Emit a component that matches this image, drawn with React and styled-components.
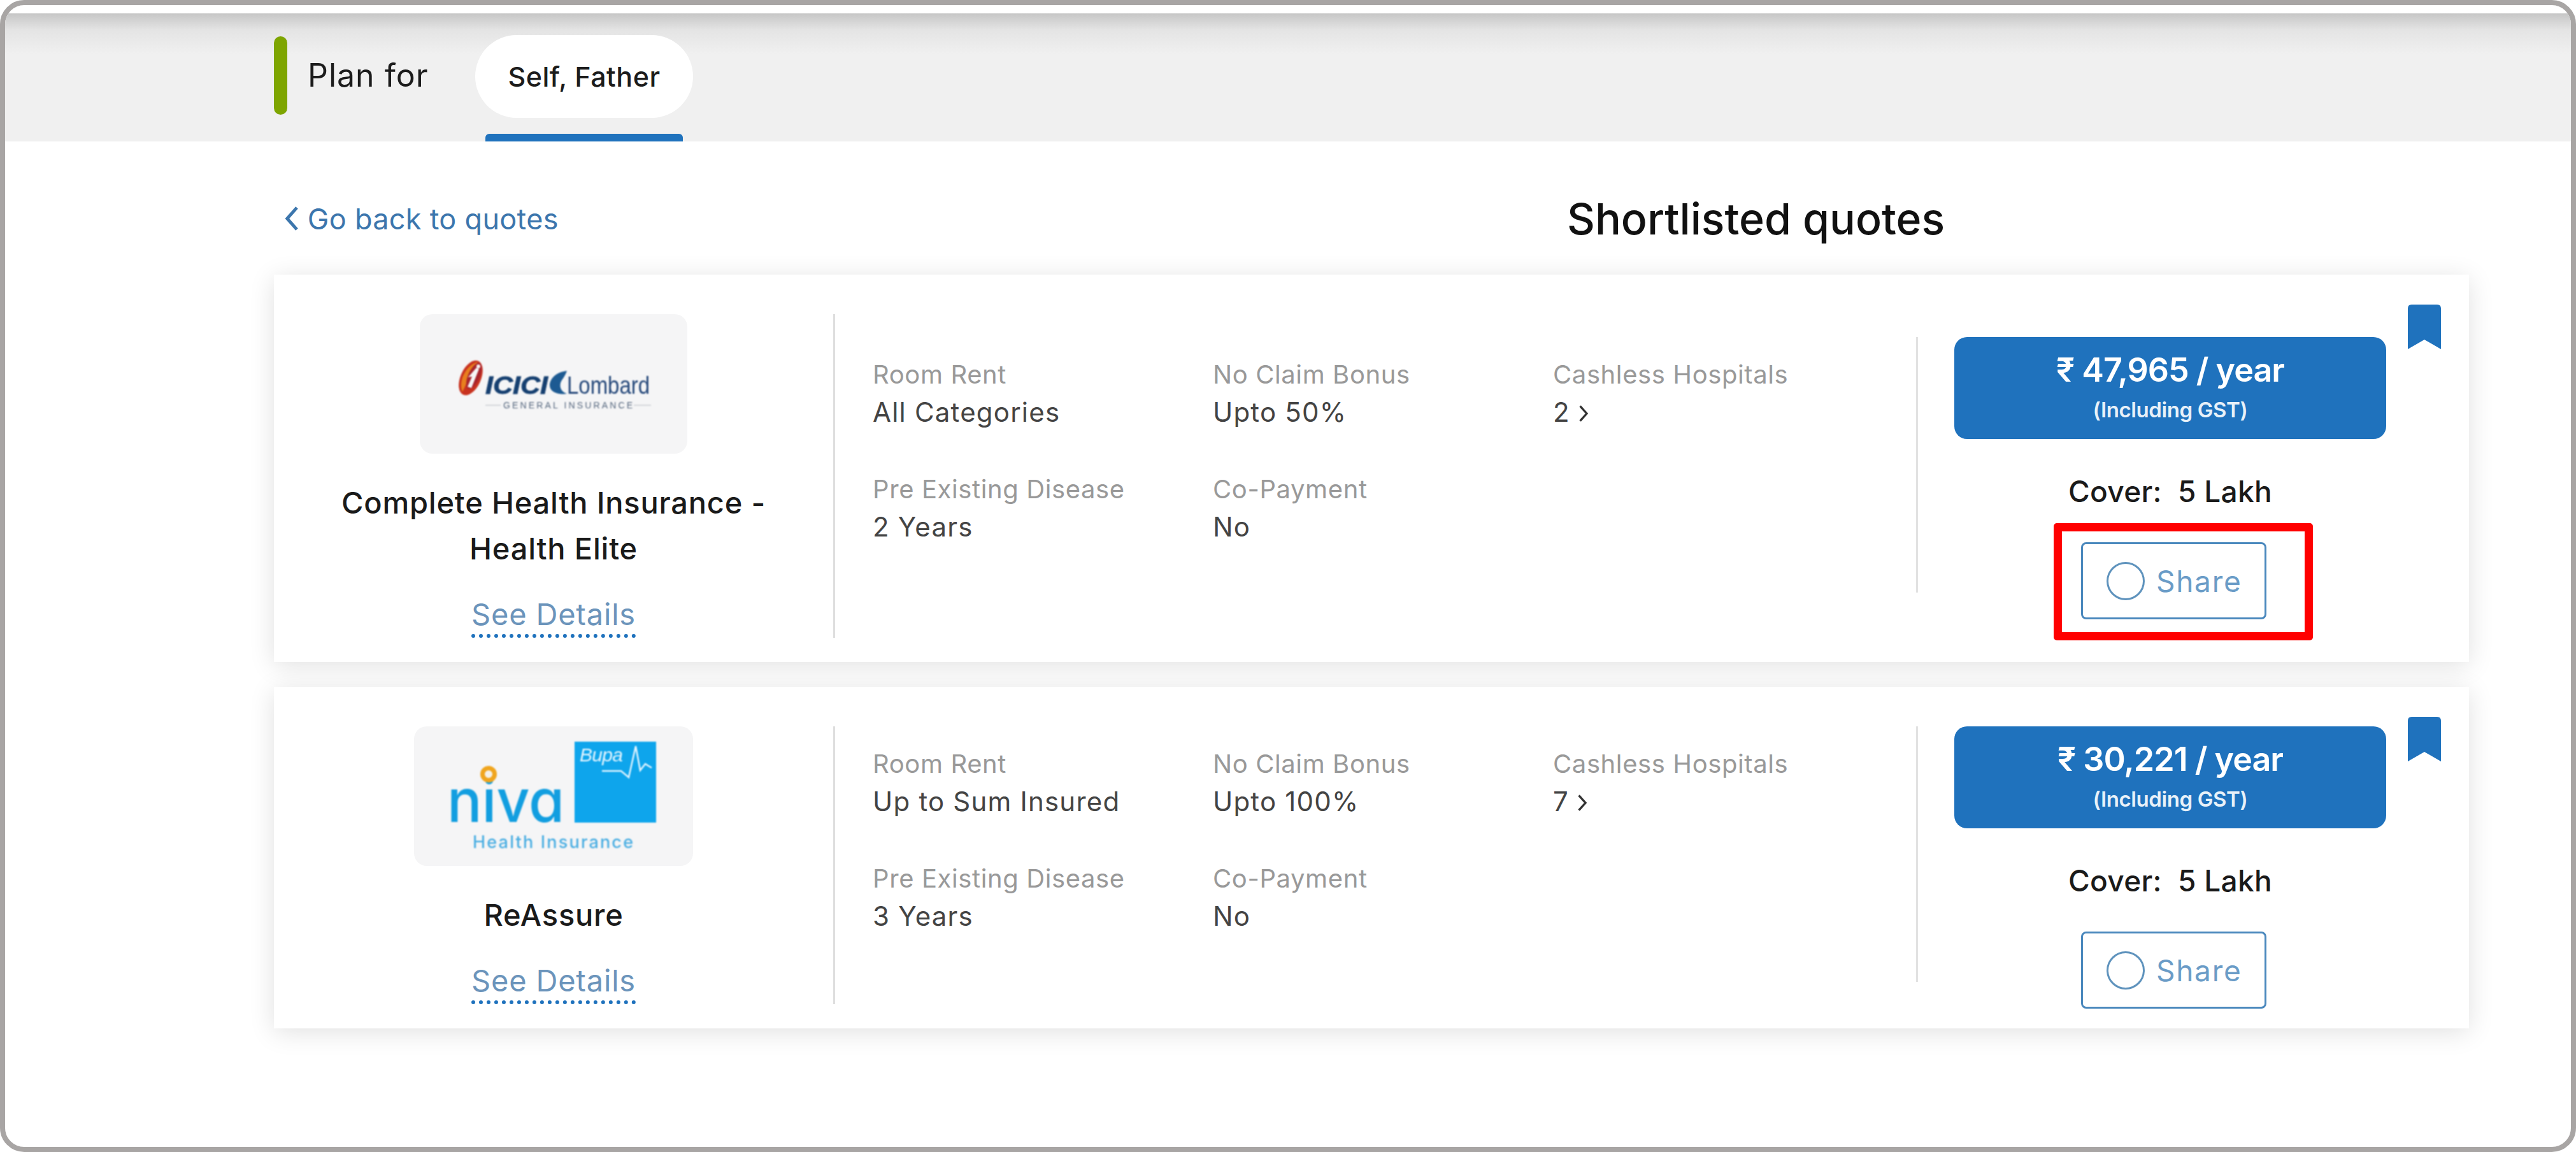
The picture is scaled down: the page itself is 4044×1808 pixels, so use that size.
import React from 'react'
import styled, { createGlobalStyle } from 'styled-components'

const BLUE = '#1f72bd'

const quotes = [
    {
        id: 'icici',
        logo: 'icici',
        logoWidth: 420,
        name: ['Complete Health Insurance -', 'Health Elite'],
        room: 'All Categories',
        bonus: 'Upto 50%',
        hospitals: '2',
        disease: '2 Years',
        copay: 'No',
        price: '₹ 47,965 / year',
        offset: 36,
        highlight: true,
    },
    {
        id: 'niva',
        logo: 'niva',
        logoWidth: 438,
        name: ['ReAssure'],
        room: 'Up to Sum Insured',
        bonus: 'Upto 100%',
        hospitals: '7',
        disease: '3 Years',
        copay: 'No',
        price: '₹ 30,221 / year',
        offset: 0,
    },
]

const GlobalStyle = createGlobalStyle`
    html, body {
        margin: 0;
        padding: 0;
        background: #fff;
    }
    body {
        font-family: Inter, "Open Sans", "Liberation Sans", sans-serif;
    }
`

function IciciLogo() {
    return (
        <LogoSvg width="310" height="80" viewBox="0 0 310 80">
            <ellipse cx="25" cy="30" rx="16" ry="29" transform="rotate(24 25 30)" fill="#c8321f" />
            <path d="M12 52 C5 34 18 10 36 5 C26 20 20 36 12 52 Z" fill="#e8801e" />
            <ellipse cx="30" cy="27" rx="9" ry="22" transform="rotate(24 30 27)" fill="#a8242c" />
            <path d="M34 14 L38 16 L26 46 L20 44 L27 28 L21 29 Z" fill="#f6f6f7" />
            <circle cx="37" cy="12" r="3" fill="#f6f6f7" />
            <text x="48" y="55" fontFamily="Liberation Sans" fontWeight="700" fontStyle="italic" fontSize="38" fill="#153f70" stroke="#153f70" strokeWidth="0.8" textLength="98" lengthAdjust="spacingAndGlyphs">ICICI</text>
            <path d="M176 19 C158 21 149 32 149 42 C149 51 160 57 176 55 C168 52 164 46 166 38 C168 32 172 30 176 19 Z" fill="#1d5a92" />
            <text x="176" y="55" fontFamily="Liberation Sans" fontSize="38" fill="#25487a" textLength="130" lengthAdjust="spacingAndGlyphs">Lombard</text>
            <path d="M48 73 H72 M281 73 H308" stroke="#d4d7dc" strokeWidth="2" />
            <text x="76" y="78" fontFamily="Liberation Sans" fontSize="14" fill="#56677e" textLength="203">GENERAL INSURANCE</text>
        </LogoSvg>
    )
}

function NivaLogo() {
    return (
        <LogoSvg width="330" height="172" viewBox="2 0 330 172">
            <NivaWord x="0" y="126" fontSize="94" fill="#129ee0" textLength="184" lengthAdjust="spacingAndGlyphs">niva</NivaWord>
            <circle cx="65" cy="51" r="9.5" fill="#f4f1ea" stroke="#f0a51e" strokeWidth="7" />
            <rect x="200" y="0" width="128" height="127" fill="#0ea5ec" />
            <text x="208" y="31" fontFamily="Liberation Sans" fontStyle="italic" fontSize="30" fill="#e6f6ff" textLength="68">Bupa</text>
            <path d="M243 46 H273 L285 56 L296 7 L303 45 L311 35 L321 41" fill="none" stroke="#e6f6ff" strokeWidth="2.5" />
            <text x="40" y="167" fontFamily="Inter" fontWeight="500" fontSize="27" fill="#4aaee2" textLength="252">Health Insurance</text>
        </LogoSvg>
    )
}

function Chevron({ left, size, color }) {
    return (
        <ChevronSvg width={size * 0.6} height={size} viewBox="0 0 12 20">
            <path d={left ? 'M10 1 L2 10 L10 19' : 'M2 1 L10 10 L2 19'} fill="none" stroke={color} strokeWidth="2.6" />
        </ChevronSvg>
    )
}

function Bookmark() {
    return (
        <BookmarkSvg width="52" height="70" viewBox="0 0 52 70">
            <path d="M0 6 Q0 0 6 0 H46 Q52 0 52 6 V70 L26 55 L0 70 Z" fill={BLUE} />
        </BookmarkSvg>
    )
}

function QuoteCard({ quote }) {
    return (
        <Card>
            <Bookmark />
            <Plan>
                <LogoBox $width={quote.logoWidth}>
                    {quote.logo === 'icici' ? <IciciLogo /> : <NivaLogo />}
                </LogoBox>
                <PlanName>
                    {quote.name.map((line) => <div key={line}>{line}</div>)}
                </PlanName>
                <SeeDetails>See Details</SeeDetails>
            </Plan>
            <Specs>
                <SpecGrid $offset={quote.offset}>
                    <div>
                        <SpecLabel>Room Rent</SpecLabel>
                        <SpecValue>{quote.room}</SpecValue>
                    </div>
                    <div>
                        <SpecLabel>No Claim Bonus</SpecLabel>
                        <SpecValue>{quote.bonus}</SpecValue>
                    </div>
                    <div>
                        <SpecLabel>Cashless Hospitals</SpecLabel>
                        <SpecValue>
                            {quote.hospitals} <Chevron size={26} color="#333" />
                        </SpecValue>
                    </div>
                    <div>
                        <SpecLabel>Pre Existing Disease</SpecLabel>
                        <SpecValue>{quote.disease}</SpecValue>
                    </div>
                    <div>
                        <SpecLabel>Co-Payment</SpecLabel>
                        <SpecValue>{quote.copay}</SpecValue>
                    </div>
                </SpecGrid>
            </Specs>
            <Pricing $offset={quote.offset}>
                <PriceRule />
                <PriceColumn>
                    <PriceButton>
                        <PriceAmount>{quote.price}</PriceAmount>
                        <PriceNote>(Including GST)</PriceNote>
                    </PriceButton>
                    <Cover>Cover:&nbsp; 5 Lakh</Cover>
                    <ShareButton>
                        <ShareCircle />
                        Share
                        {quote.highlight && <Highlight />}
                    </ShareButton>
                </PriceColumn>
            </Pricing>
        </Card>
    )
}

function App() {
    return (
        <>
            <GlobalStyle />
            <Frame>
                <PlanBar>
                    <Accent />
                    <PlanFor>Plan for</PlanFor>
                    <PlanTab>
                        <Pill>Self, Father</Pill>
                        <TabLine />
                    </PlanTab>
                </PlanBar>
                <Content>
                    <Heading>
                        <BackLink>
                            <Chevron left size={38} color="#3c76ad" />
                            Go back to quotes
                        </BackLink>
                        <Title>Shortlisted quotes</Title>
                    </Heading>
                    <CardList>
                        {quotes.map((quote) => <QuoteCard key={quote.id} quote={quote} />)}
                    </CardList>
                </Content>
            </Frame>
        </>
    )
}

const Frame = styled.div`
    width: 4044px;
    height: 1808px;
    box-sizing: border-box;
    border: 8px solid #a8a5a4;
    border-radius: 38px;
    overflow: hidden;
    background: #fff;
    padding-top: 13px;
    color: #1c1c1c;
`

const PlanBar = styled.div`
    display: flex;
    align-items: flex-start;
    height: 201px;
    box-sizing: border-box;
    padding: 34px 0 0 422px;
    background: linear-gradient(180deg, #c6c6c6 0, #e4e4e4 26px, #f0f0f0 64px);
`

const Accent = styled.div`
    width: 21px;
    height: 123px;
    margin-top: 2px;
    border-radius: 11px;
    background: #7ea500;
`

const PlanFor = styled.div`
    width: 263px;
    margin-left: 32px;
    height: 126px;
    line-height: 126px;
    font-size: 50px;
    letter-spacing: 1px;
`

const PlanTab = styled.div`
    display: flex;
    flex-direction: column;
    align-items: center;
    width: 342px;
`

const Pill = styled.div`
    width: 100%;
    height: 130px;
    line-height: 130px;
    border-radius: 65px;
    background: #fff;
    text-align: center;
    font-size: 43px;
    font-weight: 500;
    letter-spacing: 0.5px;
`

const TabLine = styled.div`
    width: 310px;
    height: 12px;
    margin-top: 25px;
    border-radius: 6px 6px 0 0;
    background: ${BLUE};
`

const Content = styled.div`
    padding-left: 422px;
`

const Heading = styled.div`
    display: grid;
    grid-template-columns: 2030px auto;
    align-items: center;
    height: 209px;
    padding-top: 33px;
    box-sizing: border-box;
`

const BackLink = styled.a`
    display: flex;
    align-items: center;
    gap: 13px;
    margin-left: 17px;
    font-size: 45px;
    letter-spacing: 0.3px;
    color: #3c76ad;
`

const Title = styled.h1`
    margin: 0;
    font-size: 68px;
    font-weight: 500;
    color: #111;
`

const CardList = styled.div`
    display: flex;
    flex-direction: column;
    gap: 39px;
    width: 3446px;
`

const Card = styled.section`
    position: relative;
    display: flex;
    padding: 62px 0 38px;
    background: #fff;
    box-shadow: 0 6px 38px rgba(0, 0, 0, 0.12);
`

const BookmarkSvg = styled.svg`
    position: absolute;
    top: 47px;
    right: 44px;
`

const Plan = styled.div`
    display: flex;
    flex-direction: column;
    align-items: center;
    width: 878px;
    flex: none;
`

const LogoBox = styled.div`
    display: flex;
    align-items: center;
    justify-content: center;
    width: ${(props) => props.$width}px;
    height: 219px;
    border-radius: 20px;
    background: #f5f5f6;
`

const LogoSvg = styled.svg`
    overflow: visible;
    filter: blur(0.8px);
`

const NivaWord = styled.text`
    font-family: Inter, sans-serif;
    font-weight: 500;
    font-feature-settings: "cv11";
`

const ChevronSvg = styled.svg`
    flex: none;
`

const PlanName = styled.div`
    margin-top: 41px;
    font-size: 47px;
    line-height: 72px;
    font-weight: 500;
    letter-spacing: 0.8px;
    text-align: center;
    color: #1a1a1a;
`

const SeeDetails = styled.a`
    margin-top: 40px;
    padding-bottom: 4px;
    line-height: 54px;
    font-size: 47px;
    letter-spacing: 0.8px;
    color: #6b94bb;
    border-bottom: 6px dotted ${BLUE};
`

const Specs = styled.div`
    width: 1700px;
    flex: none;
    box-sizing: border-box;
    padding-left: 59px;
    border-left: 3px solid #dedede;
`

const SpecGrid = styled.div`
    display: grid;
    grid-template-columns: 534px 534px auto;
    grid-auto-rows: 109px;
    row-gap: 71px;
    padding-top: ${(props) => props.$offset + 34}px;
`

const SpecLabel = styled.div`
    font-size: 40px;
    line-height: 50px;
    letter-spacing: 0.6px;
    margin-bottom: 9px;
    color: #999;
`

const SpecValue = styled.div`
    font-size: 42px;
    line-height: 50px;
    letter-spacing: 1.2px;
    color: #444;
`

const Pricing = styled.div`
    display: flex;
    align-self: flex-start;
    height: 401px;
    margin-top: ${(props) => props.$offset}px;
`

const PriceRule = styled.div`
    width: 3px;
    height: 401px;
    background: #e2e2e2;
`

const PriceColumn = styled.div`
    display: flex;
    flex-direction: column;
    align-items: center;
    width: 678px;
    margin-left: 57px;
`

const PriceButton = styled.div`
    display: flex;
    flex-direction: column;
    align-items: center;
    justify-content: center;
    flex: none;
    width: 100%;
    height: 160px;
    border-radius: 20px;
    background: ${BLUE};
    color: #fff;
`

const PriceAmount = styled.div`
    font-size: 52px;
    line-height: 68px;
    font-weight: 600;
    letter-spacing: -1px;
    margin-top: -6px;
`

const PriceNote = styled.div`
    font-size: 33px;
    line-height: 44px;
    font-weight: 600;
    letter-spacing: -0.4px;
    margin-top: 6px;
    color: #e8f1f9;
`

const Cover = styled.div`
    flex: none;
    margin-top: 52px;
    font-size: 46px;
    line-height: 60px;
    font-weight: 500;
    letter-spacing: 0.3px;
    color: #1a1a1a;
`

const ShareButton = styled.div`
    position: relative;
    display: flex;
    flex: none;
    align-items: center;
    gap: 18px;
    box-sizing: border-box;
    width: 291px;
    height: 121px;
    margin: 50px 0 0 11px;
    padding-left: 37px;
    border: 3px solid #4a88bd;
    border-radius: 8px;
    font-size: 46px;
    letter-spacing: 1.7px;
    color: #6a9cc7;
`

const ShareCircle = styled.span`
    flex: none;
    width: 60px;
    height: 60px;
    box-sizing: border-box;
    border: 3px solid #5f93bd;
    border-radius: 50%;
`

const Highlight = styled.span`
    position: absolute;
    top: -33px;
    right: -76px;
    bottom: -36px;
    left: -46px;
    border: 13px solid #f00;
    border-radius: 5px;
`

export default App
